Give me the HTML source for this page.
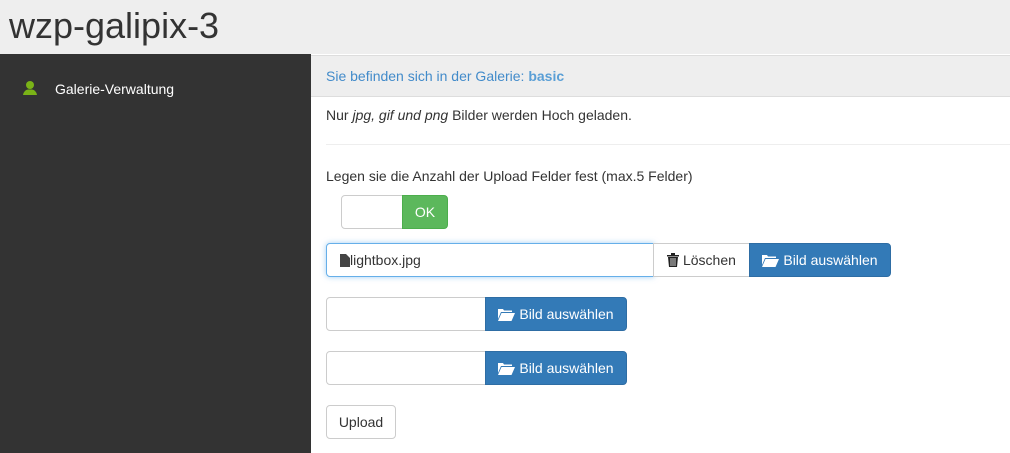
<!DOCTYPE html>
<html><head><meta charset="utf-8"><style>
*{box-sizing:border-box}
body{margin:0;width:1010px;height:453px;overflow:hidden;font-family:"Liberation Sans",sans-serif;font-size:14px;color:#333;background:#fff;position:relative}
.hdr{position:absolute;left:0;top:0;width:1010px;height:54px;background:#eee}
.hdr h1{margin:0;position:absolute;left:9px;top:4px;font-size:36px;font-weight:normal;color:#333;line-height:44px}
.side{position:absolute;left:0;top:54px;width:311px;height:399px;background:#333}
.side .it{position:absolute;left:55px;top:27px;color:#fff;font-size:14px}
.bc{position:absolute;left:311px;top:55px;width:699px;height:42px;background:#eee;border-top:1px solid #ddd;border-bottom:1px solid #ddd;color:#428bca;padding:12px 15px;line-height:16px}
.bc b{color:#5a9fd6}
.abs{position:absolute}
.btn{position:absolute;height:34px;border:1px solid #ccc;border-radius:4px;line-height:32px;font-size:14px;text-align:center;background:#fff;color:#333}
.blue{background:#337ab7;border-color:#2e6da4;color:#fff}
.inp{position:absolute;height:34px;border:1px solid #ccc;border-radius:4px 0 0 4px;background:#fff}
</style></head><body>
<div class="hdr"><h1>wzp-galipix-3</h1></div>
<div class="side">
<svg class="abs" style="left:22px;top:26px" width="16" height="16" viewBox="0 0 16 16"><circle cx="8" cy="5" r="4" fill="#7ab317"/><path d="M1 15 Q2 10 6 9.5 L10 9.5 Q14 10 15 15Z" fill="#7ab317"/></svg>
<div class="it">Galerie-Verwaltung</div></div>
<div class="bc">Sie befinden sich in der Galerie: <b>basic</b></div>
<div class="abs" style="left:326px;top:107px">Nur <i>jpg, gif und png</i> Bilder werden Hoch geladen.</div>
<div class="abs" style="left:326px;top:144px;width:684px;border-top:1px solid #eee"></div>
<div class="abs" style="left:326px;top:168px">Legen sie die Anzahl der Upload Felder fest (max.5 Felder)</div>
<div class="inp" style="left:341px;top:195px;width:62px"></div>
<div class="btn" style="left:402px;top:195px;width:46px;background:#5cb85c;border-color:#4cae4c;color:#fff;border-radius:0 4px 4px 0">OK</div>
<div class="inp" style="left:326px;top:243px;width:328px;border-color:#66afe9;box-shadow:0 0 6px rgba(102,175,233,.6);padding-left:13px;line-height:32px"><svg style="vertical-align:-2px" width="10" height="13" viewBox="0 0 10 13"><path d="M0 0H6L10 4V13H0Z" fill="#444"/></svg>lightbox.jpg</div>
<div class="btn" style="left:653px;top:243px;width:97px;border-radius:0"><svg style="vertical-align:-2px" width="12" height="14" viewBox="0 0 12 14"><path d="M0 2H12V3.5H0ZM4 0H8V2H4ZM1 4H11L10 14H2Z" fill="#222"/><path d="M4 5V13M6 5V13M8 5V13" stroke="#fff" stroke-width=".8"/></svg> Löschen</div>
<div class="btn blue" style="left:749px;top:243px;width:142px;border-radius:0 4px 4px 0"><svg style="vertical-align:-2px" width="17" height="13" viewBox="0 0 17 13"><path d="M0 1H5L6 2.5H14V4H3L0 11Z M3.5 5H17L13.5 13H0Z" fill="#fff"/></svg> Bild auswählen</div>
<div class="inp" style="left:326px;top:297px;width:160px"></div>
<div class="btn blue" style="left:485px;top:297px;width:142px;border-radius:0 4px 4px 0"><svg style="vertical-align:-2px" width="17" height="13" viewBox="0 0 17 13"><path d="M0 1H5L6 2.5H14V4H3L0 11Z M3.5 5H17L13.5 13H0Z" fill="#fff"/></svg> Bild auswählen</div>
<div class="inp" style="left:326px;top:351px;width:160px"></div>
<div class="btn blue" style="left:485px;top:351px;width:142px;border-radius:0 4px 4px 0"><svg style="vertical-align:-2px" width="17" height="13" viewBox="0 0 17 13"><path d="M0 1H5L6 2.5H14V4H3L0 11Z M3.5 5H17L13.5 13H0Z" fill="#fff"/></svg> Bild auswählen</div>
<div class="btn" style="left:326px;top:405px;width:70px">Upload</div>
</body></html>
